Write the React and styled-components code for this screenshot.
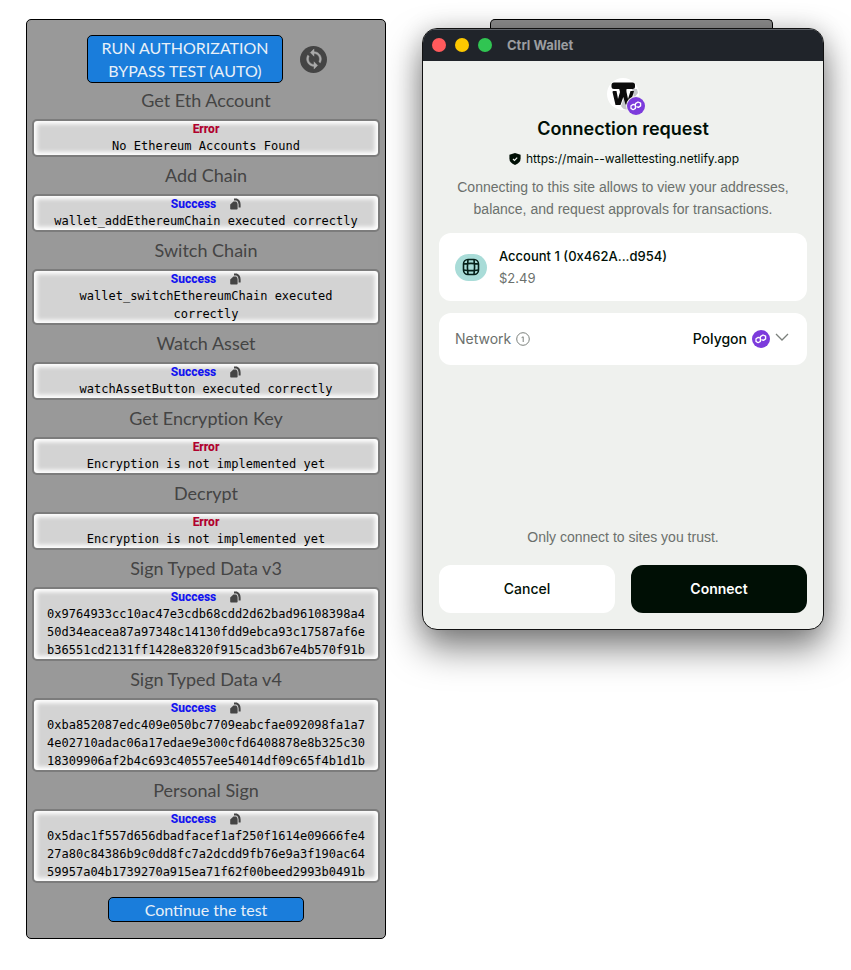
import { useState } from "react";
import styled, { createGlobalStyle, css } from "styled-components";

const GlobalStyle = createGlobalStyle`
  * {
    box-sizing: border-box;
  }

  body {
    margin: 0;
    background: #fff;
  }

  button {
    cursor: pointer;
  }
`;

const Page = styled.main`
  display: flex;
  align-items: flex-start;
  gap: 36px;
  padding: 19px 27px 31px 26px;
`;

/* ---------- test panel ---------- */

const TestPanel = styled.section`
  flex: 0 0 360px;
  display: flex;
  flex-direction: column;
  padding: 16px 5px;
  border: 1px solid #000;
  border-radius: 5px;
  background: #999;
  font-family: Lato, "Noto Sans", sans-serif;
  font-variant-ligatures: none;
`;

const RunRow = styled.div`
  display: flex;
  justify-content: center;
  align-items: center;
  gap: 17px;
  height: 46px;
  padding-left: 2px;
`;

const BlueButton = styled.button`
  width: 196px;
  padding: 0 8px;
  border: 1px solid #000;
  border-radius: 5px;
  background: #1a7ddb;
  color: #e8f0f8;
  font-family: inherit;
  font-size: 16px;
  line-height: 23px;
`;

const ContinueButton = styled(BlueButton)`
  align-self: center;
  margin-top: 14px;
`;

const RoundButton = styled.button`
  display: flex;
  justify-content: center;
  align-items: center;
  width: 27px;
  height: 27px;
  padding: 0;
  border: 0;
  border-radius: 50%;
  background: #444;
  color: #aaa;
`;

const TestTitle = styled.h2`
  margin: 0;
  color: #444;
  font-size: 18px;
  font-weight: 400;
  line-height: 37px;
  text-align: center;
`;

const ResultBox = styled.div`
  padding: 0 10px;
  border: 2px solid #7c7c7c;
  border-radius: 5px;
  background: #d3d3d3;
  box-shadow: inset 0 0 4px 3px #fff;
  text-align: center;
`;

const StatusRow = styled.div`
  display: flex;
  justify-content: center;
  align-items: center;
  gap: 14px;
  height: 16px;
`;

const Status = styled.strong`
  color: ${(props) => (props.$error ? "#b0002e" : "#1414f0")};
  font-family: Roboto, sans-serif;
  font-size: 12px;
  font-weight: 800;
  line-height: 16px;
`;

const CopyButton = styled.button`
  display: flex;
  padding: 0;
  border: 0;
  background: none;
  color: #444;
`;

const Message = styled.p`
  margin: 0;
  color: #000;
  font-family: "DejaVu Sans Mono", monospace;
  font-size: 12px;
  line-height: 18px;
  overflow-wrap: anywhere;
`;

/* ---------- wallet window ---------- */

const Desktop = styled.div`
  flex: 1;
  min-width: 0;
`;

const HiddenPanel = styled.div`
  width: 283px;
  height: 9px;
  margin-left: 68px;
  border: 1px solid #000;
  border-bottom: 0;
  border-radius: 5px 5px 0 0;
  background: #8f8f8f;
`;

const Window = styled.section`
  position: relative;
  display: flex;
  flex-direction: column;
  min-height: 602px;
  overflow: hidden;
  border: 1px solid #111;
  border-radius: 15px;
  background: #eff1ee;
  box-shadow: 0 18px 36px rgba(0, 0, 0, 0.5), 0 0 24px rgba(0, 0, 0, 0.15);
  color: #000f05;
  font-family: Inter, sans-serif;
`;

const TitleBar = styled.header`
  display: flex;
  align-items: center;
  gap: 9px;
  height: 32px;
  padding: 0 9px;
  background: #20242a;
  box-shadow: inset 0 1px 0 #60646a;
`;

const Light = styled.button`
  width: 14px;
  height: 14px;
  padding: 0;
  border: 0;
  border-radius: 50%;
  background: ${(props) => props.$color};
`;

const WindowTitle = styled.span`
  margin-left: 6px;
  color: #9b9da0;
  font-size: 13px;
  font-weight: 700;
`;

const WindowBody = styled.div`
  flex: 1;
  display: flex;
  flex-direction: column;
  padding: 17px 16px 16px;
`;

const SiteLogo = styled.div`
  align-self: center;
  height: 38px;
  margin-left: 6px;
`;

const Heading = styled.h1`
  margin: 0;
  font-size: 18px;
  font-weight: 600;
  line-height: 26px;
  text-align: center;
`;

const SiteUrl = styled.div`
  display: flex;
  justify-content: center;
  align-items: center;
  gap: 5px;
  margin-top: 8px;
  padding-left: 2px;
  font-size: 12px;
  line-height: 18px;
`;

const Note = styled.p`
  margin: 0;
  color: #6b706c;
  font-family: "Liberation Sans", sans-serif;
  font-size: 14px;
  line-height: 22px;
  text-align: center;
`;

const Intro = styled(Note)`
  margin-top: 8px;
`;

const Card = styled.div`
  display: flex;
  align-items: center;
  padding: 12px 16px;
  border-radius: 12px;
  background: #fff;
  font-size: 14px;
  line-height: 22px;
`;

const AccountCard = styled(Card)`
  gap: 12px;
  min-height: 68px;
  margin-top: 13px;
  font-size: 13px;
`;

const NetworkCard = styled(Card)`
  gap: 5px;
  min-height: 52px;
  margin-top: 12px;
`;

const Avatar = styled.div`
  display: flex;
  justify-content: center;
  align-items: center;
  width: 32px;
  height: 27px;
  border-radius: 14px;
  background: #a9dcd8;
`;

const AccountName = styled.div`
  font-weight: 500;
`;

const Muted = styled.div`
  color: #6b706c;
`;

const NetworkButton = styled.button`
  display: flex;
  align-items: center;
  gap: 5px;
  margin-left: auto;
  padding: 0;
  border: 0;
  background: none;
  color: inherit;
  font: inherit;
  font-weight: 500;
`;

const Actions = styled.div`
  display: flex;
  gap: 16px;
  margin-top: 17px;
`;

const ActionButton = styled.button`
  flex: 1;
  height: 48px;
  padding: 0 8px 2px;
  border: 0;
  border-radius: 12px;
  background: #fff;
  color: #000f05;
  font-family: inherit;
  font-size: 14px;
  font-weight: 500;

  ${(props) =>
    props.$primary &&
    css`
      background: #000f05;
      color: #fff;
      font-weight: 600;
    `}
`;

const Spacer = styled.div`
  flex: 1;
`;

/* ---------- icons ---------- */

const SyncIcon = () => (
  <svg width="22" height="22" viewBox="0 0 24 24" fill="currentColor" stroke="currentColor" strokeWidth="0.5" aria-hidden="true">
    <path d="M12 4V1L8 5l4 4V6c3.31 0 6 2.69 6 6 0 1.01-.25 1.97-.7 2.8l1.46 1.46A7.93 7.93 0 0 0 20 12c0-4.42-3.58-8-8-8zm0 14c-3.31 0-6-2.69-6-6 0-1.01.25-1.97.7-2.8L5.24 7.74A7.93 7.93 0 0 0 4 12c0 4.42 3.58 8 8 8v3l4-4-4-4v3z" />
  </svg>
);

const CopyIcon = () => (
  <svg width="11" height="12" viewBox="0 0 11 12" aria-hidden="true">
    <path d="M3.4 3.4H6.2Q7.6 4.4 7.6 6.4V10.8Q7.6 11.6 6.8 11.6H1Q.2 11.6 .2 10.8V6.4z" fill="currentColor" />
    <path d="M4 1.4H6.4Q9.6 2.8 9.6 6.4V9.6" fill="none" stroke="currentColor" strokeWidth="2" />
  </svg>
);

const PolygonMark = () => (
  <>
    <circle r="9" fill="#7c3bdc" />
    <g fill="none" stroke="#fff" strokeWidth="1.3" strokeLinejoin="round">
      <path d="M-.6 -.8L-2.8 -1.6L-5 -.3V2.4L-2.9 3.7L-.6 2.4V-2.4L2 -4L4.6 -2.8V-.1L2.4 1.4L.4 .6" />
    </g>
  </>
);

const PolygonIcon = () => (
  <svg width="18" height="18" viewBox="-9 -9 18 18" aria-hidden="true">
    <PolygonMark />
  </svg>
);

const LogoIcon = () => (
  <svg width="38" height="38" viewBox="0 0 38 38" role="img" aria-label="Wallet testing">
    <circle cx="16" cy="16" r="16" fill="#fff" />
    <path d="M14 28L17 20L22 31Q17 33 14 28zM25 11H30L31 15L27 20z" fill="#c4c6ca" />
    <g fill="#0c0c0c">
      <rect x="4.5" y="4.500" width="23.500" height="6.500" rx="2.500" />
      <path d="M5.500 14Q5.500 13 6.500 13H9.500L11 21L13 14Q12.500 12 12 10H20Q19 12 19.500 14L21 21L23.500 13H27L23 26.500H18.500L16.300 19L13.500 27H8.500z" />
    </g>
    <g transform="translate(29 28)">
      <circle r="10" fill="#eff1ee" />
      <PolygonMark />
    </g>
  </svg>
);

const ShieldIcon = () => (
  <svg width="12" height="12" viewBox="0 0 12 12" aria-hidden="true">
    <path d="M6 0L11.600 1.800V5.600Q11.600 10 6 12Q.4 10 .4 5.600V1.800z" fill="#000f05" />
    <path d="M4 6L5.500 7.400L8.200 4.600" fill="none" stroke="#eff1ee" strokeWidth="1.200" />
  </svg>
);

const AvatarIcon = () => (
  <svg width="18" height="18" viewBox="0 0 18 18" fill="none" stroke="#062019" strokeWidth="1.6" aria-hidden="true">
    <rect x="1.500" y="1.500" width="15" height="15" rx="4.500" />
    <path d="M6 1.500Q4.800 9 6 16.500M12 1.500Q13.200 9 12 16.500M1.500 6Q9 4.800 16.500 6M1.500 12Q9 13.200 16.500 12" />
  </svg>
);

const InfoIcon = () => (
  <svg width="14" height="14" viewBox="0 0 14 14" fill="none" stroke="#7b807c" aria-hidden="true">
    <circle cx="7" cy="7" r="6.300" />
    <path d="M5.600 5.600L7.200 4.800V10" />
  </svg>
);

const ChevronIcon = () => (
  <svg width="16" height="12" viewBox="0 0 16 12" fill="none" stroke="#7b807c" strokeWidth="1.3" aria-hidden="true">
    <path d="M1 1L7 7L13 1" />
  </svg>
);

const tests = [
  { title: "Get Eth Account", error: true, message: "No Ethereum Accounts Found" },
  { title: "Add Chain", message: "wallet_addEthereumChain executed correctly" },
  { title: "Switch Chain", message: "wallet_switchEthereumChain executed correctly" },
  { title: "Watch Asset", message: "watchAssetButton executed correctly" },
  { title: "Get Encryption Key", error: true, message: "Encryption is not implemented yet" },
  { title: "Decrypt", error: true, message: "Encryption is not implemented yet" },
  {
    title: "Sign Typed Data v3",
    message:
      "0x9764933cc10ac47e3cdb68cdd2d62bad96108398a450d34eacea87a97348c14130fdd9ebca93c17587af6eb36551cd2131ff1428e8320f915cad3b67e4b570f91b",
  },
  {
    title: "Sign Typed Data v4",
    message:
      "0xba852087edc409e050bc7709eabcfae092098fa1a74e02710adac06a17edae9e300cfd6408878e8b325c3018309906af2b4c693c40557ee54014df09c65f4b1d1b",
  },
  {
    title: "Personal Sign",
    message:
      "0x5dac1f557d656dbadfacef1af250f1614e09666fe427a80c84386b9c0dd8fc7a2dcdd9fb76e9a3f190ac6459957a04b1739270a915ea71f62f00beed2993b0491b",
  },
];

const TestResult = ({ title, error, message }) => {
  const handleCopy = () => navigator.clipboard?.writeText(message);

  return (
    <>
      <TestTitle>{title}</TestTitle>
      <ResultBox>
        <StatusRow>
          <Status $error={error}>{error ? "Error" : "Success"}</Status>
          {!error && (
            <CopyButton type="button" aria-label="Copy result" onClick={handleCopy}>
              <CopyIcon />
            </CopyButton>
          )}
        </StatusRow>
        <Message>{message}</Message>
      </ResultBox>
    </>
  );
};

const WalletWindow = ({ onClose }) => (
  <Window>
    <TitleBar>
      <Light type="button" aria-label="Close" $color="#ff5a5c" onClick={onClose} />
      <Light type="button" aria-label="Minimize" $color="#fdc800" />
      <Light type="button" aria-label="Zoom" $color="#30c552" />
      <WindowTitle>Ctrl Wallet</WindowTitle>
    </TitleBar>
    <WindowBody>
      <SiteLogo>
        <LogoIcon />
      </SiteLogo>
      <Heading>Connection request</Heading>
      <SiteUrl>
        <ShieldIcon />
        https://main--wallettesting.netlify.app
      </SiteUrl>
      <Intro>
        Connecting to this site allows to view your addresses, balance, and request approvals for
        transactions.
      </Intro>
      <AccountCard>
        <Avatar>
          <AvatarIcon />
        </Avatar>
        <div>
          <AccountName>Account 1 (0x462A...d954)</AccountName>
          <Muted>$2.49</Muted>
        </div>
      </AccountCard>
      <NetworkCard>
        <Muted>Network</Muted>
        <InfoIcon />
        <NetworkButton type="button">
          Polygon
          <PolygonIcon />
          <ChevronIcon />
        </NetworkButton>
      </NetworkCard>
      <Spacer />
      <Note>Only connect to sites you trust.</Note>
      <Actions>
        <ActionButton type="button" onClick={onClose}>
          Cancel
        </ActionButton>
        <ActionButton type="button" $primary onClick={onClose}>
          Connect
        </ActionButton>
      </Actions>
    </WindowBody>
  </Window>
);

export default function App() {
  const [walletOpen, setWalletOpen] = useState(true);

  return (
    <>
      <GlobalStyle />
      <Page>
        <TestPanel>
          <RunRow>
            <BlueButton type="button" onClick={() => setWalletOpen(true)}>
              RUN AUTHORIZATION BYPASS TEST (AUTO)
            </BlueButton>
            <RoundButton type="button" aria-label="Reset">
              <SyncIcon />
            </RoundButton>
          </RunRow>
          {tests.map((test) => (
            <TestResult key={test.title} {...test} />
          ))}
          <ContinueButton type="button" onClick={() => setWalletOpen(true)}>
            Continue the test
          </ContinueButton>
        </TestPanel>
        <Desktop>
          <HiddenPanel />
          {walletOpen && <WalletWindow onClose={() => setWalletOpen(false)} />}
        </Desktop>
      </Page>
    </>
  );
}
